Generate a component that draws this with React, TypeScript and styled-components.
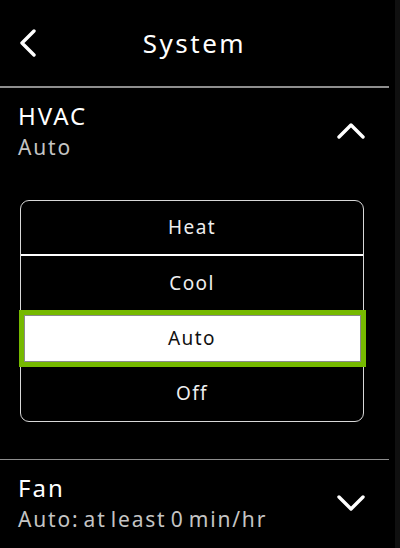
import React, { useState } from 'react';
import styled, { createGlobalStyle } from 'styled-components';

const GlobalStyle = createGlobalStyle`
  html, body {
    margin: 0;
    padding: 0;
    background: #000;
  }

  body {
    font-family: 'Noto Sans', 'DejaVu Sans', sans-serif;
    color: #fff;
  }
`;

const Screen = styled.div`
  display: flex;
  width: 400px;
  height: 548px;
  overflow: hidden;
  background: #000;
`;

const Main = styled.main`
  flex: 1;
  display: flex;
  flex-direction: column;
`;

const ScrollTrack = styled.div`
  width: 5px;
  background: #101010;
`;

const Header = styled.header`
  display: grid;
  grid-template-columns: 60px 1fr 60px;
  align-items: center;
  height: 86px;
  margin-right: 6px;
`;

const BackButton = styled.button`
  display: flex;
  align-items: center;
  justify-content: flex-start;
  padding: 0 0 0 20px;
  height: 40px;
  background: none;
  border: none;
  color: #fff;
`;

const Title = styled.h1`
  margin: 0;
  text-align: center;
  font-size: 26px;
  font-weight: 400;
  letter-spacing: 2.5px;
`;

const Divider = styled.hr`
  margin: 0 6px 0 0;
  height: 1.5px;
  border: none;
  background: #8e8e8e;
`;

const Section = styled.section`
  display: flex;
  flex-direction: column;
`;

const SectionHead = styled.div`
  display: flex;
  align-items: center;
  justify-content: space-between;
  padding: 13px 30px 0 18px;
`;

const Labels = styled.div`
  display: flex;
  flex-direction: column;
`;

const SectionTitle = styled.div`
  font-size: 24px;
  line-height: 30px;
  letter-spacing: 2px;
  color: #fff;
`;

const SectionValue = styled.div`
  margin-top: 2px;
  font-size: 21px;
  line-height: 28px;
  letter-spacing: 1.8px;
  word-spacing: -3px;
  color: #c4c4c4;
`;

const Options = styled.div`
  display: flex;
  flex-direction: column;
  margin: 39px 31px 37px 20px;
  border: 1.5px solid #d8d8d8;
  border-radius: 9px;
`;

const Option = styled.button<{ $selected?: boolean; $divided?: boolean }>`
  display: flex;
  align-items: center;
  justify-content: center;
  height: ${(p) => (p.$selected ? '57px' : '55px')};
  margin: ${(p) => (p.$selected ? '-1px -2.5px' : '0')};
  padding: 0;
  font-family: inherit;
  font-size: 19px;
  letter-spacing: 1.4px;
  color: ${(p) => (p.$selected ? '#111' : '#eee')};
  background: ${(p) => (p.$selected ? '#fff' : 'transparent')};
  border: ${(p) => (p.$selected ? '5px solid #76b900' : 'none')};
  border-bottom: ${(p) =>
    p.$selected ? '5px solid #76b900' : p.$divided ? '2px solid #fff' : 'none'};
  box-shadow: ${(p) => (p.$selected ? 'inset 0 0 0 1px #8a8a8a' : 'none')};
  position: relative;
  z-index: ${(p) => (p.$selected ? 1 : 0)};
`;

const Chevron = ({ dir }: { dir: 'up' | 'down' | 'left' }) => {
  const paths = {
    up: 'M2 15 L14 3 L26 15',
    down: 'M2 3 L14 15 L26 3',
    left: 'M14 2 L2 14 L14 26',
  };
  const box = dir === 'left' ? '0 0 16 28' : '0 0 28 18';
  const size = dir === 'left' ? { width: 16, height: 28 } : { width: 28, height: 18 };
  return (
    <svg viewBox={box} {...size} fill="none" stroke="#fff" strokeWidth={3.4} strokeLinecap="round" strokeLinejoin="round">
      <path d={paths[dir]} />
    </svg>
  );
};

const modes = ['Heat', 'Cool', 'Auto', 'Off'];

export default function App() {
  const [mode, setMode] = useState('Auto');

  return (
    <>
      <GlobalStyle />
      <Screen>
        <Main>
          <Header>
            <BackButton aria-label="Back">
              <Chevron dir="left" />
            </BackButton>
            <Title>System</Title>
            <span />
          </Header>
          <Divider />

          <Section>
            <SectionHead>
              <Labels>
                <SectionTitle>HVAC</SectionTitle>
                <SectionValue>{mode}</SectionValue>
              </Labels>
              <Chevron dir="up" />
            </SectionHead>
            <Options>
              {modes.map((m, i) => (
                <Option
                  key={m}
                  $selected={m === mode}
                  $divided={i === 0 && modes[1] !== mode}
                  onClick={() => setMode(m)}
                >
                  {m}
                </Option>
              ))}
            </Options>
          </Section>
          <Divider />

          <Section>
            <SectionHead>
              <Labels>
                <SectionTitle>Fan</SectionTitle>
                <SectionValue>Auto: at least 0 min/hr</SectionValue>
              </Labels>
              <Chevron dir="down" />
            </SectionHead>
          </Section>
        </Main>
        <ScrollTrack />
      </Screen>
    </>
  );
}
